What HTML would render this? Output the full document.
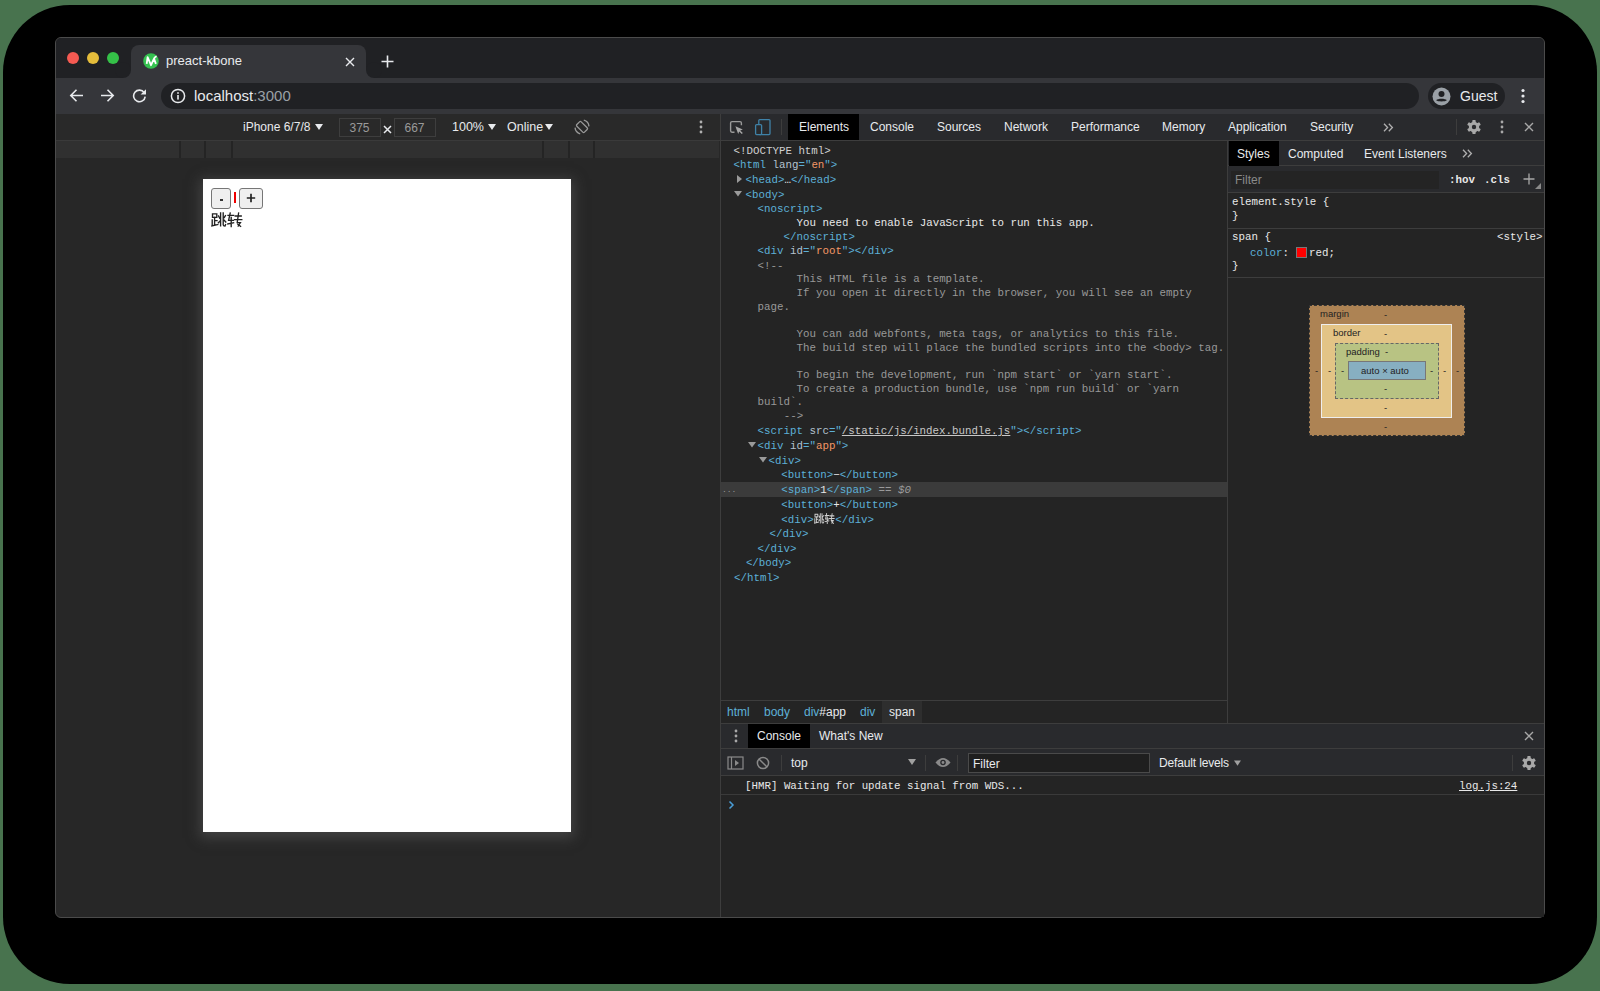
<!DOCTYPE html>
<html><head><meta charset="utf-8">
<style>
*{margin:0;padding:0;box-sizing:border-box}
html,body{width:1600px;height:991px;overflow:hidden;background:#48734e}
body{position:relative;font-family:"Liberation Sans",sans-serif;}
.a{position:absolute}
.mono{font-family:"Liberation Mono",monospace;font-size:10.8px;white-space:pre;line-height:14px}
.t{color:#5db0d7}
.an{color:#b4c2cf}
.av{color:#f29766}
.tx{color:#e8e8e8}
.cm{color:#989898}
.ui{font-size:12px;color:#e8eaed;white-space:nowrap;line-height:16px}
</style></head><body>
<!-- shadow -->
<div class="a" style="left:3px;top:5px;width:1594px;height:979px;background:#000;border-radius:67px"></div>
<!-- window -->
<div class="a" id="win" style="left:55px;top:37px;width:1490px;height:881px;background:#272727;border:1px solid #4b4b4b;border-radius:6px;overflow:hidden">
</div>
<!-- title bar -->
<div class="a" style="left:56px;top:38px;width:1488px;height:40px;background:#202124;border-radius:5px 5px 0 0"></div>
<div class="a" style="left:73px;top:58px;width:12px;height:12px;margin:-6px 0 0 -6px;border-radius:50%;background:#f55a52"></div>
<div class="a" style="left:93px;top:58px;width:12px;height:12px;margin:-6px 0 0 -6px;border-radius:50%;background:#e5bd3b"></div>
<div class="a" style="left:112.6px;top:58px;width:12px;height:12px;margin:-6px 0 0 -6px;border-radius:50%;background:#35c148"></div>
<!-- tab -->
<div class="a" style="left:131px;top:45px;width:235px;height:33px;background:#35363a;border-radius:8px 8px 0 0"></div>
<div class="a" style="left:123px;top:70px;width:8px;height:8px;background:#35363a"></div>
<div class="a" style="left:115px;top:62px;width:16px;height:16px;background:#202124;border-radius:50%"></div>
<div class="a" style="left:366px;top:70px;width:8px;height:8px;background:#35363a"></div>
<div class="a" style="left:366px;top:62px;width:16px;height:16px;background:#202124;border-radius:50%"></div>
<svg class="a" style="left:142.8px;top:53.2px" width="16" height="16" viewBox="0 0 16 16"><circle cx="8" cy="8" r="7.8" fill="#35c250"/><path d="M3.7 10.9L4.6 4.2L8 12.2L11 5.6L12.9 10.9M11 5.6Q12 4 13.6 3.3" fill="none" stroke="#fff" stroke-width="1.8" stroke-linejoin="round"/></svg>
<div class="a ui" style="left:166px;top:53px;font-size:13px;color:#e8eaed">preact-kbone</div>
<svg class="a" style="left:345px;top:56.5px" width="10" height="10" viewBox="0 0 10 10"><path d="M1 1L9 9M9 1L1 9" stroke="#e8eaed" stroke-width="1.4"/></svg>
<svg class="a" style="left:381px;top:55px" width="13" height="13" viewBox="0 0 13 13"><path d="M6.5 0.5V12.5M0.5 6.5H12.5" stroke="#e8eaed" stroke-width="1.6"/></svg>
<!-- toolbar -->
<div class="a" style="left:56px;top:78px;width:1488px;height:36px;background:#35363a"></div>
<svg class="a" style="left:69px;top:87.7px" width="15" height="15" viewBox="0 0 15 15"><path d="M14 7.5H2M7.5 1.8L1.8 7.5L7.5 13.2" fill="none" stroke="#e8eaed" stroke-width="1.6"/></svg>
<svg class="a" style="left:100px;top:87.7px" width="15" height="15" viewBox="0 0 15 15"><path d="M1 7.5H13M7.5 1.8L13.2 7.5L7.5 13.2" fill="none" stroke="#e8eaed" stroke-width="1.6"/></svg>
<svg class="a" style="left:132px;top:87.7px" width="15" height="15" viewBox="0 0 15 15"><path d="M12.2 4.6A5.8 5.8 0 1 0 13.2 8.6" fill="none" stroke="#e8eaed" stroke-width="1.6"/><path d="M14 1.2V6.6H8.6Z" fill="#e8eaed"/></svg>
<div class="a" style="left:161px;top:83px;width:1258px;height:26px;background:#202124;border-radius:13px"></div>
<svg class="a" style="left:170px;top:88px" width="16" height="16" viewBox="0 0 16 16"><circle cx="8" cy="8" r="6.6" fill="none" stroke="#e8eaed" stroke-width="1.5"/><rect x="7.2" y="7" width="1.6" height="4.6" fill="#e8eaed"/><rect x="7.2" y="4.2" width="1.6" height="1.6" fill="#e8eaed"/></svg>
<div class="a ui" style="left:194px;top:87px;font-size:15px;line-height:18px;color:#e8eaed">localhost<span style="color:#9aa0a6">:3000</span></div>
<div class="a" style="left:1428px;top:83px;width:77px;height:26px;background:#202124;border-radius:13px"></div>
<svg class="a" style="left:1432px;top:87px" width="19" height="19" viewBox="0 0 19 19"><circle cx="9.5" cy="9.5" r="9" fill="#9aa0a6"/><circle cx="9.5" cy="7" r="3" fill="#202124"/><path d="M4.2 13.2C5.5 11.2 13.5 11.2 14.8 13.2C13.5 14.8 5.5 14.8 4.2 13.2Z" fill="#202124"/></svg>
<div class="a ui" style="left:1460px;top:87px;font-size:14px;line-height:18px;color:#e8eaed">Guest</div>
<svg class="a" style="left:1521px;top:88px" width="4" height="16" viewBox="0 0 4 16"><circle cx="2" cy="2.5" r="1.6" fill="#e8eaed"/><circle cx="2" cy="8" r="1.6" fill="#e8eaed"/><circle cx="2" cy="13.5" r="1.6" fill="#e8eaed"/></svg>
<!-- device toolbar -->
<div class="a" style="left:56px;top:114px;width:664px;height:27px;background:#292929;border-bottom:1px solid #3a3a3a"></div>
<div class="a ui" style="left:243px;top:119px;font-size:12px">iPhone 6/7/8</div><svg class="a" style="left:314.5px;top:124px" width="8" height="6" viewBox="0 0 8 6"><path d="M0 0H8L4 6Z" fill="#e8eaed"/></svg>
<div class="a" style="left:339px;top:118px;width:42px;height:19px;border:1px solid #3e3e3e"></div>
<div class="a ui" style="left:349.5px;top:119.5px;color:#9a9a9a;font-size:12px">375</div>
<svg class="a" style="left:383px;top:124.5px" width="9" height="9" viewBox="0 0 9 9"><path d="M1 1L8 8M8 1L1 8" stroke="#e8eaed" stroke-width="1.5"/></svg>
<div class="a" style="left:393.5px;top:118px;width:42px;height:19px;border:1px solid #3e3e3e"></div>
<div class="a ui" style="left:404.5px;top:119.5px;color:#9a9a9a;font-size:12px">667</div>
<div class="a ui" style="left:452px;top:119px;font-size:12.5px">100%</div><svg class="a" style="left:487.5px;top:124px" width="8" height="6" viewBox="0 0 8 6"><path d="M0 0H8L4 6Z" fill="#e8eaed"/></svg>
<div class="a ui" style="left:507px;top:119px;font-size:12.5px">Online</div><svg class="a" style="left:545px;top:124px" width="8" height="6" viewBox="0 0 8 6"><path d="M0 0H8L4 6Z" fill="#e8eaed"/></svg>
<svg class="a" style="left:574.3px;top:119.4px" width="16" height="16" viewBox="0 0 16 16"><rect x="4.9" y="2.6" width="6.2" height="10.8" rx="1.2" transform="rotate(-45 8 8)" fill="none" stroke="#9a9a9a" stroke-width="1.3"/><path d="M9.81 1.24A7 7 0 0 1 14.97 7.39M6.19 14.76A7 7 0 0 1 1.03 8.61" fill="none" stroke="#9a9a9a" stroke-width="1.3"/></svg>
<svg class="a" style="left:699px;top:120px" width="4" height="14" viewBox="0 0 4 14"><circle cx="2" cy="2" r="1.4" fill="#b0b0b0"/><circle cx="2" cy="7" r="1.4" fill="#b0b0b0"/><circle cx="2" cy="12" r="1.4" fill="#b0b0b0"/></svg>
<!-- ruler -->
<div class="a" style="left:56px;top:141px;width:663px;height:17px;background:#303030"></div>
<div class="a" style="left:179px;top:141px;width:2px;height:17px;background:#242424"></div>
<div class="a" style="left:204px;top:141px;width:2px;height:17px;background:#242424"></div>
<div class="a" style="left:231px;top:141px;width:2px;height:17px;background:#242424"></div>
<div class="a" style="left:542px;top:141px;width:2px;height:17px;background:#242424"></div>
<div class="a" style="left:568px;top:141px;width:2px;height:17px;background:#242424"></div>
<div class="a" style="left:593px;top:141px;width:2px;height:17px;background:#242424"></div>
<!-- screen -->
<div class="a" style="left:203px;top:179px;width:368px;height:653px;background:#fff;box-shadow:0 3px 12px 3px rgba(90,90,90,0.55)"></div>
<div class="a" style="left:211px;top:187.5px;width:20px;height:21px;background:#efefef;border:1.5px solid #767676;border-radius:3px"></div>
<div class="a" style="left:219.5px;top:199px;width:3.5px;height:1.5px;background:#333"></div>
<div class="a" style="left:234px;top:192px;width:1.6px;height:11px;background:#e00"></div>
<div class="a" style="left:239px;top:187.5px;width:23.5px;height:21px;background:#efefef;border:1.5px solid #767676;border-radius:3px"></div>
<svg class="a" style="left:246px;top:193px" width="10" height="10" viewBox="0 0 10 10"><path d="M5 0.8V9.2M0.8 5H9.2" stroke="#222" stroke-width="1.7"/></svg>
<svg class="a" style="left:211px;top:211.5px" width="32" height="16" viewBox="0 0 32 16">
<g fill="none" stroke="#222" stroke-width="1.35" stroke-linecap="square">
<path d="M1.5 1.8H5.8V5.4H1.5Z"/><path d="M3.6 5.4V13.2M3.6 8.6H6M1.2 8V13.6M0.8 14L6.8 12.6"/>
<path d="M9.6 1V13.8M12.2 1V12.8Q12.2 14 14 14L14.6 12.6M7.6 4L8.6 6M7.4 10.8L9.4 8.6M14.4 3.6L13.2 5.6M13.2 8.2L14.8 10"/>
</g>
<g fill="none" stroke="#222" stroke-width="1.35" stroke-linecap="square" transform="translate(16 0)">
<path d="M1 3.4H6.6M3.2 1L1.6 8.4H6.4M4.2 5.4V14.6M0.8 12L6.6 10.8"/>
<path d="M8.2 4H14.2M7.6 7.6H14.8M11.6 1L10.2 10.6H13.4L11.2 14M10.8 12.2L13.6 14.4"/>
</g></svg>
<!-- devtools -->
<div class="a" style="left:720px;top:114px;width:1px;height:803px;background:#3d3d3d"></div>
<div class="a" style="left:721px;top:114px;width:823px;height:26px;background:#292a2d"></div>
<div class="a" style="left:721px;top:140px;width:823px;height:1px;background:#3d3d3d"></div>
<svg class="a" style="left:729px;top:119px" width="16" height="16" viewBox="0 0 16 16"><path d="M5.5 13.2H3Q1.6 13.2 1.6 11.8V4Q1.6 2.6 3 2.6H11Q12.4 2.6 12.4 4V6.2" fill="none" stroke="#9a9a9a" stroke-width="1.4"/><path d="M6.4 7.2L13.8 10.4L11.2 11.4L13.8 14L12.8 15L10.2 12.4L9.2 15Z" fill="#a8a8a8"/></svg>
<svg class="a" style="left:754px;top:118px" width="18" height="18" viewBox="0 0 18 18"><rect x="4.8" y="1.6" width="11.2" height="15" rx="1" fill="none" stroke="#3f82a8" stroke-width="1.3"/><rect x="1.6" y="6.6" width="6" height="10" rx="1" fill="#292a2d" stroke="#3f82a8" stroke-width="1.3"/></svg>
<div class="a" style="left:781px;top:119px;width:1px;height:16px;background:#3d3d3d"></div>
<div class="a" style="left:788px;top:114px;width:71px;height:26px;background:#000"></div>
<div class="a ui" style="left:799px;top:119px">Elements</div>
<div class="a ui" style="left:870px;top:119px">Console</div>
<div class="a ui" style="left:937px;top:119px">Sources</div>
<div class="a ui" style="left:1004px;top:119px">Network</div>
<div class="a ui" style="left:1071px;top:119px">Performance</div>
<div class="a ui" style="left:1162px;top:119px">Memory</div>
<div class="a ui" style="left:1228px;top:119px">Application</div>
<div class="a ui" style="left:1310px;top:119px">Security</div>
<svg class="a" style="left:1382.5px;top:122.5px" width="11" height="9" viewBox="0 0 11 9"><path d="M1 0.8L4.6 4.5L1 8.2M5.8 0.8L9.4 4.5L5.8 8.2" fill="none" stroke="#b0b0b0" stroke-width="1.3"/></svg>
<div class="a" style="left:1456px;top:119px;width:1px;height:16px;background:#3d3d3d"></div>
<svg class="a" style="left:1466px;top:119px" width="16" height="16" viewBox="0 0 16 16"><g fill="#a8a8a8"><circle cx="8" cy="8" r="5.2"/><rect x="6.3" y="1" width="3.4" height="14" rx="0.8"/><rect x="6.3" y="1" width="3.4" height="14" rx="0.8" transform="rotate(60 8 8)"/><rect x="6.3" y="1" width="3.4" height="14" rx="0.8" transform="rotate(120 8 8)"/></g><circle cx="8" cy="8" r="2.2" fill="#292a2d"/></svg>
<svg class="a" style="left:1500px;top:120px" width="4" height="14" viewBox="0 0 4 14"><circle cx="2" cy="2" r="1.4" fill="#a8a8a8"/><circle cx="2" cy="7" r="1.4" fill="#a8a8a8"/><circle cx="2" cy="12" r="1.4" fill="#a8a8a8"/></svg>
<svg class="a" style="left:1524px;top:122px" width="10" height="10" viewBox="0 0 10 10"><path d="M1 1L9 9M9 1L1 9" stroke="#a8a8a8" stroke-width="1.4"/></svg>
<!-- elements tree -->
<div class="a" style="left:721px;top:141px;width:506px;height:559px;background:#242424"></div>
<div class="a" style="left:1227px;top:141px;width:1px;height:582px;background:#3d3d3d"></div>
<div class="a" style="left:721px;top:482px;width:506px;height:15px;background:#3b3b3b"></div>
<div class="a mono" style="left:733.6px;top:143.5px"><span style="color:#d0d0d0">&lt;!DOCTYPE html&gt;</span></div>
<div class="a mono" style="left:733.6px;top:158.0px"><span class="t">&lt;html </span><span class="an">lang</span><span class="t">="</span><span class="av">en</span><span class="t">"&gt;</span></div>
<div class="a mono" style="left:745.5px;top:172.8px"><span class="t">&lt;head&gt;</span><span class="tx">…</span><span class="t">&lt;/head&gt;</span></div>
<div class="a mono" style="left:745.5px;top:187.5px"><span class="t">&lt;body&gt;</span></div>
<div class="a mono" style="left:757.6px;top:202.1px"><span class="t">&lt;noscript&gt;</span></div>
<div class="a mono" style="left:796.6px;top:215.8px"><span class="tx">You need to enable JavaScript to run this app.</span></div>
<div class="a mono" style="left:783.6px;top:229.5px"><span class="t">&lt;/noscript&gt;</span></div>
<div class="a mono" style="left:757.6px;top:244.2px"><span class="t">&lt;div </span><span class="an">id</span><span class="t">="</span><span class="av">root</span><span class="t">"&gt;&lt;/div&gt;</span></div>
<div class="a mono" style="left:757.6px;top:258.5px"><span class="cm">&lt;!--</span></div>
<div class="a mono" style="left:796.6px;top:272.4px"><span class="cm">This HTML file is a template.</span></div>
<div class="a mono" style="left:796.6px;top:286.2px"><span class="cm">If you open it directly in the browser, you will see an empty</span></div>
<div class="a mono" style="left:757.6px;top:299.9px"><span class="cm">page.</span></div>
<div class="a mono" style="left:796.6px;top:326.8px"><span class="cm">You can add webfonts, meta tags, or analytics to this file.</span></div>
<div class="a mono" style="left:796.6px;top:340.8px"><span class="cm">The build step will place the bundled scripts into the &lt;body&gt; tag.</span></div>
<div class="a mono" style="left:796.6px;top:368.2px"><span class="cm">To begin the development, run `npm start` or `yarn start`.</span></div>
<div class="a mono" style="left:796.6px;top:381.9px"><span class="cm">To create a production bundle, use `npm run build` or `yarn</span></div>
<div class="a mono" style="left:757.6px;top:395.3px"><span class="cm">build`.</span></div>
<div class="a mono" style="left:783.8px;top:409.0px"><span class="cm">--&gt;</span></div>
<div class="a mono" style="left:757.6px;top:424.0px"><span class="t">&lt;script </span><span class="an">src</span><span class="t">="</span><span style="color:#c8c8c8;text-decoration:underline">/static/js/index.bundle.js</span><span class="t">"&gt;&lt;/script&gt;</span></div>
<div class="a mono" style="left:757.6px;top:438.9px"><span class="t">&lt;div </span><span class="an">id</span><span class="t">="</span><span class="av">app</span><span class="t">"&gt;</span></div>
<div class="a mono" style="left:768.6px;top:453.5px"><span class="t">&lt;div&gt;</span></div>
<div class="a mono" style="left:781.3px;top:468.0px"><span class="t">&lt;button&gt;</span><span class="tx">−</span><span class="t">&lt;/button&gt;</span></div>
<div class="a mono" style="left:781.3px;top:483.0px"><span class="t">&lt;span&gt;</span><span class="tx">1</span><span class="t">&lt;/span&gt;</span><span style="color:#9a9a9a"> == <i>$0</i></span></div>
<div class="a mono" style="left:781.3px;top:497.5px"><span class="t">&lt;button&gt;</span><span class="tx">+</span><span class="t">&lt;/button&gt;</span></div>
<div class="a mono" style="left:781.3px;top:512.5px"><span class="t">&lt;div&gt;</span><span style="display:inline-block;width:21.5px"></span><span class="t">&lt;/div&gt;</span></div>
<div class="a mono" style="left:769.5px;top:527.0px"><span class="t">&lt;/div&gt;</span></div>
<div class="a mono" style="left:757.6px;top:541.5px"><span class="t">&lt;/div&gt;</span></div>
<div class="a mono" style="left:745.9px;top:556.2px"><span class="t">&lt;/body&gt;</span></div>
<div class="a mono" style="left:734px;top:570.5px"><span class="t">&lt;/html&gt;</span></div>
<svg class="a" style="left:735.5px;top:174.3px" width="8" height="10" viewBox="0 0 8 10"><path d="M1 1L6 5L1 9Z" fill="#9a9a9a"/></svg>
<svg class="a" style="left:733px;top:190px" width="10" height="8" viewBox="0 0 10 8"><path d="M1 1H9L5 6.5Z" fill="#9a9a9a"/></svg>
<svg class="a" style="left:746.5px;top:441.4px" width="10" height="8" viewBox="0 0 10 8"><path d="M1 1H9L5 6.5Z" fill="#9a9a9a"/></svg>
<svg class="a" style="left:758px;top:456px" width="10" height="8" viewBox="0 0 10 8"><path d="M1 1H9L5 6.5Z" fill="#9a9a9a"/></svg>
<div class="a mono" style="left:722px;top:482.5px;color:#9a9a9a;font-size:8px">...</div>
<svg class="a" style="left:813.5px;top:512.5px" width="21" height="11.5" viewBox="0 0 32 16" preserveAspectRatio="none">
<g fill="none" stroke="#d0d0d0" stroke-width="1.4" stroke-linecap="square">
<path d="M1.5 1.8H5.8V5.4H1.5Z"/><path d="M3.6 5.4V13.2M3.6 8.6H6M1.2 8V13.6M0.8 14L6.8 12.6"/>
<path d="M9.6 1V13.8M12.2 1V12.8Q12.2 14 14 14L14.6 12.6M7.6 4L8.6 6M7.4 10.8L9.4 8.6M14.4 3.6L13.2 5.6M13.2 8.2L14.8 10"/>
</g>
<g fill="none" stroke="#d0d0d0" stroke-width="1.4" stroke-linecap="square" transform="translate(16 0)">
<path d="M1 3.4H6.6M3.2 1L1.6 8.4H6.4M4.2 5.4V14.6M0.8 12L6.6 10.8"/>
<path d="M8.2 4H14.2M7.6 7.6H14.8M11.6 1L10.2 10.6H13.4L11.2 14M10.8 12.2L13.6 14.4"/>
</g></svg>
<!-- styles pane -->
<div class="a" style="left:1228px;top:141px;width:316px;height:776px;background:#242424"></div>
<div class="a" style="left:1228px;top:141px;width:316px;height:25px;background:#292a2d;border-bottom:1px solid #3d3d3d"></div>
<div class="a" style="left:1229px;top:141px;width:50px;height:25px;background:#000"></div>
<div class="a ui" style="left:1237px;top:146px">Styles</div>
<div class="a ui" style="left:1288px;top:146px">Computed</div>
<div class="a ui" style="left:1364px;top:146px">Event Listeners</div>
<svg class="a" style="left:1462px;top:149px" width="11" height="9" viewBox="0 0 11 9"><path d="M1 0.8L4.6 4.5L1 8.2M5.8 0.8L9.4 4.5L5.8 8.2" fill="none" stroke="#b0b0b0" stroke-width="1.3"/></svg>
<div class="a" style="left:1228px;top:166px;width:316px;height:27px;background:#292a2d;border-bottom:1px solid #3d3d3d"></div>
<div class="a" style="left:1231px;top:171px;width:208px;height:18px;background:#242424"></div>
<div class="a ui" style="left:1235px;top:172px;color:#8a8a8a;font-size:12px">Filter</div>
<div class="a mono" style="left:1449px;top:172.5px;color:#e8e8e8;font-weight:bold">:hov</div><div class="a mono" style="left:1484px;top:172.5px;color:#e8e8e8;font-weight:bold">.cls</div>
<svg class="a" style="left:1523px;top:173px" width="12" height="12" viewBox="0 0 12 12"><path d="M6 0.5V11.5M0.5 6H11.5" stroke="#a8a8a8" stroke-width="1.3"/></svg>
<svg class="a" style="left:1535px;top:183px" width="6" height="6" viewBox="0 0 6 6"><path d="M6 0V6H0Z" fill="#8a8a8a"/></svg>
<div class="a mono" style="left:1232px;top:194.5px;color:#e8e8e8">element.style {
}</div>
<div class="a" style="left:1228px;top:228px;width:316px;height:1px;background:#3d3d3d"></div>
<div class="a mono" style="left:1232px;top:230px;color:#e8e8e8">span {</div>
<div class="a mono" style="left:1497px;top:230px;color:#e8e8e8">&lt;style&gt;</div>
<div class="a mono" style="left:1250px;top:245.5px"><span class="t">color</span><span style="color:#e8e8e8">:</span></div>
<div class="a" style="left:1296px;top:247px;width:11px;height:11px;background:#f00;border:1px solid #777"></div>
<div class="a mono" style="left:1309px;top:245.5px;color:#e8e8e8">red;</div>
<div class="a mono" style="left:1232px;top:258.5px;color:#e8e8e8">}</div>
<div class="a" style="left:1228px;top:277px;width:316px;height:1px;background:#3d3d3d"></div>
<!-- box model -->
<div class="a" style="left:1308.5px;top:305px;width:156px;height:131px;background:#ad8354;border:1px dashed #333"></div>
<div class="a" style="left:1321px;top:323.5px;width:131px;height:94px;background:#e3c486;border:1px solid #eee"></div>
<div class="a" style="left:1335px;top:342.5px;width:103.5px;height:56.5px;background:#b8c383;border:1px dashed #666"></div>
<div class="a" style="left:1348px;top:361px;width:78px;height:19px;background:#87afc1;border:1px solid #777"></div>
<div class="a" style="left:1320px;top:308px;font-size:9.5px;color:#222;line-height:12px">margin</div>
<div class="a" style="left:1333px;top:327px;font-size:9.5px;color:#222;line-height:12px">border</div>
<div class="a" style="left:1346px;top:346px;font-size:9.5px;color:#222;line-height:12px">padding</div>
<div class="a" style="left:1361px;top:364.5px;font-size:9.5px;color:#222;line-height:12px">auto × auto</div>
<div class="a" style="left:1384px;top:309px;font-size:9.5px;color:#222;line-height:12px">-</div>
<div class="a" style="left:1384px;top:328px;font-size:9.5px;color:#222;line-height:12px">-</div>
<div class="a" style="left:1385px;top:346px;font-size:9.5px;color:#222;line-height:12px">-</div>
<div class="a" style="left:1384px;top:383px;font-size:9.5px;color:#222;line-height:12px">-</div>
<div class="a" style="left:1384px;top:402px;font-size:9.5px;color:#222;line-height:12px">-</div>
<div class="a" style="left:1384px;top:421px;font-size:9.5px;color:#222;line-height:12px">-</div>
<div class="a" style="left:1315px;top:365px;font-size:9.5px;color:#222;line-height:12px">-</div>
<div class="a" style="left:1328px;top:365px;font-size:9.5px;color:#222;line-height:12px">-</div>
<div class="a" style="left:1341px;top:365px;font-size:9.5px;color:#222;line-height:12px">-</div>
<div class="a" style="left:1430px;top:365px;font-size:9.5px;color:#222;line-height:12px">-</div>
<div class="a" style="left:1443px;top:365px;font-size:9.5px;color:#222;line-height:12px">-</div>
<div class="a" style="left:1456px;top:365px;font-size:9.5px;color:#222;line-height:12px">-</div>
<!-- breadcrumbs -->
<div class="a" style="left:721px;top:700px;width:506px;height:1px;background:#3d3d3d"></div>
<div class="a" style="left:721px;top:701px;width:506px;height:22px;background:#242424"></div>
<div class="a" style="left:882px;top:701px;width:40px;height:22px;background:#2e2e2e"></div>
<div class="a ui" style="left:727px;top:704px;color:#5db0d7">html</div>
<div class="a ui" style="left:764px;top:704px;color:#5db0d7">body</div>
<div class="a ui" style="left:804px;top:704px;color:#5db0d7">div<span style="color:#e8eaed">#app</span></div>
<div class="a ui" style="left:860px;top:704px;color:#5db0d7">div</div>
<div class="a ui" style="left:889px;top:704px">span</div>
<!-- console drawer -->
<div class="a" style="left:721px;top:723px;width:823px;height:1px;background:#3d3d3d"></div>
<div class="a" style="left:721px;top:724px;width:823px;height:25px;background:#292a2d;border-bottom:1px solid #3d3d3d"></div>
<svg class="a" style="left:734px;top:729px" width="4" height="14" viewBox="0 0 4 14"><circle cx="2" cy="2" r="1.4" fill="#a8a8a8"/><circle cx="2" cy="7" r="1.4" fill="#a8a8a8"/><circle cx="2" cy="12" r="1.4" fill="#a8a8a8"/></svg>
<div class="a" style="left:748px;top:724px;width:62px;height:24px;background:#000"></div>
<div class="a ui" style="left:757px;top:728px">Console</div>
<div class="a ui" style="left:819px;top:728px">What's New</div>
<svg class="a" style="left:1524px;top:731px" width="10" height="10" viewBox="0 0 10 10"><path d="M1 1L9 9M9 1L1 9" stroke="#a8a8a8" stroke-width="1.4"/></svg>
<div class="a" style="left:721px;top:749px;width:823px;height:27px;background:#292a2d;border-bottom:1px solid #3d3d3d"></div>
<svg class="a" style="left:727px;top:756px" width="17" height="14" viewBox="0 0 17 14"><rect x="1" y="1" width="15" height="12" fill="none" stroke="#8a8a8a" stroke-width="1.2"/><path d="M4.5 1V13" stroke="#8a8a8a" stroke-width="1.2"/><path d="M8 4V10L12 7Z" fill="#8a8a8a"/></svg>
<svg class="a" style="left:756px;top:756px" width="14" height="14" viewBox="0 0 14 14"><circle cx="7" cy="7" r="5.6" fill="none" stroke="#8a8a8a" stroke-width="1.5"/><path d="M3 3L11 11" stroke="#8a8a8a" stroke-width="1.5"/></svg>
<div class="a" style="left:781px;top:755px;width:1px;height:16px;background:#3d3d3d"></div>
<div class="a ui" style="left:791px;top:754.5px">top</div>
<svg class="a" style="left:908px;top:759px" width="8" height="6" viewBox="0 0 8 6"><path d="M0 0H8L4 6Z" fill="#a0a0a0"/></svg>
<div class="a" style="left:925px;top:755px;width:1px;height:16px;background:#3d3d3d"></div>
<svg class="a" style="left:935px;top:757px" width="16" height="11" viewBox="0 0 16 11"><path d="M0.5 5.5Q8 -3.5 15.5 5.5Q8 14.5 0.5 5.5Z" fill="#8a8a8a"/><circle cx="8" cy="5.5" r="2.8" fill="#292a2d"/><circle cx="8" cy="5.5" r="1.4" fill="#8a8a8a"/></svg>
<div class="a" style="left:957px;top:755px;width:1px;height:16px;background:#3d3d3d"></div>
<div class="a" style="left:968px;top:753px;width:182px;height:20px;background:#1f1f1f;border:1px solid #4a4a4a"></div>
<div class="a ui" style="left:973px;top:755.5px">Filter</div>
<div class="a ui" style="left:1159px;top:754.5px;letter-spacing:-0.15px">Default levels</div><svg class="a" style="left:1233.5px;top:759.5px" width="7" height="6" viewBox="0 0 8 6"><path d="M0 0H8L4 6Z" fill="#a0a0a0"/></svg>
<div class="a" style="left:1512px;top:755px;width:1px;height:16px;background:#3d3d3d"></div>
<svg class="a" style="left:1521px;top:754.5px" width="16" height="16" viewBox="0 0 16 16"><g fill="#a8a8a8"><circle cx="8" cy="8" r="5.2"/><rect x="6.3" y="1" width="3.4" height="14" rx="0.8"/><rect x="6.3" y="1" width="3.4" height="14" rx="0.8" transform="rotate(60 8 8)"/><rect x="6.3" y="1" width="3.4" height="14" rx="0.8" transform="rotate(120 8 8)"/></g><circle cx="8" cy="8" r="2.2" fill="#292a2d"/></svg>
<div class="a" style="left:721px;top:776px;width:823px;height:141px;background:#242424"></div>
<div class="a mono" style="left:745px;top:779px;color:#e8e8e8">[HMR] Waiting for update signal from WDS...</div>
<div class="a mono" style="left:1459px;top:779px;color:#e8e8e8;text-decoration:underline">log.js:24</div>
<div class="a" style="left:721px;top:794px;width:823px;height:1px;background:#3a3a3a"></div>
<svg class="a" style="left:728px;top:800px" width="7" height="10" viewBox="0 0 7 10"><path d="M1.5 1.5L5 5L1.5 8.5" fill="none" stroke="#4a9ed8" stroke-width="1.5"/></svg>
</body></html>
